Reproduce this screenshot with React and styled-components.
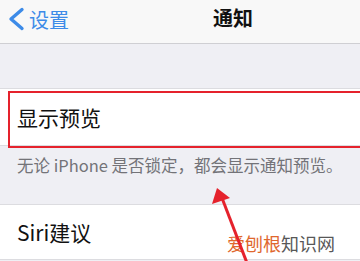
import React from 'react';
import styled, {createGlobalStyle} from 'styled-components';

const GlobalStyle = createGlobalStyle`
    html, body {
        margin: 0;
        padding: 0;
        background: #efeff4;
        font-family: 'Noto Sans CJK SC', 'Noto Sans', sans-serif;
    }
`;

const Screen = styled.div`
    position: relative;
    width: 360px;
    height: 261px;
    overflow: hidden;
    background: #efeff4;
`;

const NavBar = styled.div`
    position: relative;
    height: 43px;
    background: #f8f8f8;
    border-bottom: 1px solid #cfcfd3;
    display: flex;
    align-items: center;
`;

const BackButton = styled.div`
    display: flex;
    align-items: center;
    gap: 3px;
    padding-left: 6px;
    color: #3d8be8;
    font-size: 20px;
    margin-top: -5px;
`;

const Title = styled.div`
    position: absolute;
    left: 213px;
    top: 3px;
    font-size: 20px;
    font-weight: 600;
    color: #111;
`;

const GroupGap = styled.div`
    height: ${p => p.size}px;
    border-bottom: 1px solid #dcdce0;
`;

const Cell = styled.div`
    position: relative;
    height: ${p => p.size}px;
    background: #fff;
    border-bottom: 1px solid #dcdce0;
    display: flex;
    align-items: center;
    padding-left: 17px;
    font-size: 21px;
    color: #111;
`;

const Highlight = styled.div`
    position: absolute;
    left: 8px;
    top: 2px;
    right: -20px;
    bottom: -3px;
    border: 2px solid #e5222c;
`;

const Footer = styled.div`
    height: 59px;
    padding: 7px 0 0 17px;
    box-sizing: border-box;
    font-size: 16.5px;
    color: #737378;
    white-space: nowrap;
    border-bottom: 1px solid #dcdce0;
`;

const Watermark = styled.div`
    position: absolute;
    left: 227px;
    top: 230px;
    font-size: 18px;
    line-height: 26px;
    color: #585858;

    span {
        color: #e0672d;
    }
`;

const Arrow = styled.svg`
    position: absolute;
    left: 0;
    top: 0;
`;

function App() {
    return (
        <Screen>
            <GlobalStyle />
            <NavBar>
                <BackButton>
                    <svg width="20" height="24" viewBox="0 0 20 24">
                        <path d="M16 2.5 L5 12 L16 21.5" fill="none" stroke="#3d8be8" strokeWidth="3.4" strokeLinecap="round" strokeLinejoin="round" />
                    </svg>
                    设置
                </BackButton>
                <Title>通知</Title>
            </NavBar>
            <GroupGap size={44} />
            <Cell size={56}>
                显示预览
                <Highlight />
            </Cell>
            <Footer>无论 iPhone 是否锁定，都会显示通知预览。</Footer>
            <Cell size={54}>Siri建议</Cell>
            <Watermark><span>爱刨根</span>知识网</Watermark>
            <Arrow width="360" height="261" viewBox="0 0 360 261">
                <line x1="247" y1="263" x2="222" y2="198" stroke="#e5222c" strokeWidth="3" />
                <polygon points="217,188 212,204 230,198" fill="#e5222c" />
            </Arrow>
        </Screen>
    );
}

export default App;
